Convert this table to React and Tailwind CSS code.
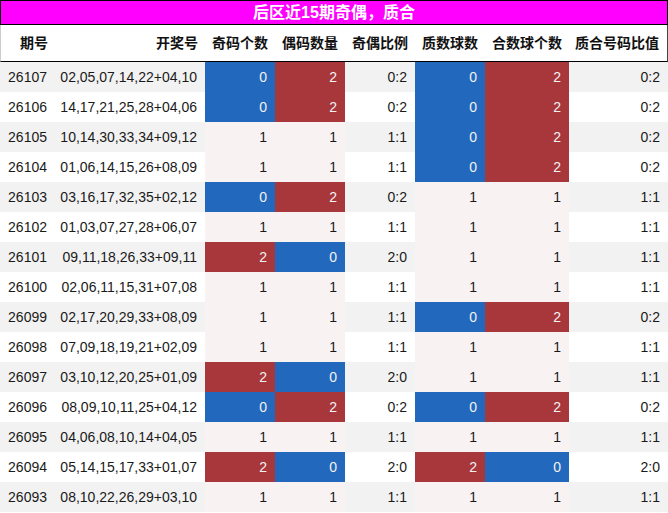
import React from "react";

const rows = [
  ["26107", "02,05,07,14,22+04,10", 0, 2, "0:2", 0, 2, "0:2"],
  ["26106", "14,17,21,25,28+04,06", 0, 2, "0:2", 0, 2, "0:2"],
  ["26105", "10,14,30,33,34+09,12", 1, 1, "1:1", 0, 2, "0:2"],
  ["26104", "01,06,14,15,26+08,09", 1, 1, "1:1", 0, 2, "0:2"],
  ["26103", "03,16,17,32,35+02,12", 0, 2, "0:2", 1, 1, "1:1"],
  ["26102", "01,03,07,27,28+06,07", 1, 1, "1:1", 1, 1, "1:1"],
  ["26101", "09,11,18,26,33+09,11", 2, 0, "2:0", 1, 1, "1:1"],
  ["26100", "02,06,11,15,31+07,08", 1, 1, "1:1", 1, 1, "1:1"],
  ["26099", "02,17,20,29,33+08,09", 1, 1, "1:1", 0, 2, "0:2"],
  ["26098", "07,09,18,19,21+02,09", 1, 1, "1:1", 1, 1, "1:1"],
  ["26097", "03,10,12,20,25+01,09", 2, 0, "2:0", 1, 1, "1:1"],
  ["26096", "08,09,10,11,25+04,12", 0, 2, "0:2", 0, 2, "0:2"],
  ["26095", "04,06,08,10,14+04,05", 1, 1, "1:1", 1, 1, "1:1"],
  ["26094", "05,14,15,17,33+01,07", 2, 0, "2:0", 2, 0, "2:0"],
  ["26093", "08,10,22,26,29+03,10", 1, 1, "1:1", 1, 1, "1:1"],
];

const widths = ["w-[55px]", "w-[150px]", "w-[70px]", "w-[70px]", "w-[70px]", "w-[70px]", "w-[84px]", "flex-1"];
const headers = ["期号", "开奖号", "奇码个数", "偶码数量", "奇偶比例", "质数球数", "合数球个数", "质合号码比值"];

function countCls(v) {
  if (v === 0) return "bg-[#2268bd] text-[#f2f2f2]";
  if (v === 2) return "bg-[#a8373c] text-[#f2f2f2]";
  return "bg-[#f9f2f2] text-[#1a1a1a]";
}

export default function App() {
  return (
    <div className="w-[668px] h-[513px] bg-white overflow-hidden" style={{ fontFamily: '"Liberation Sans", "Noto Sans CJK SC", sans-serif' }}>
      <div className="h-[25px] bg-[#ff00ff] border border-black flex items-center justify-center text-white font-bold text-[16px] leading-none whitespace-nowrap">
        后区近15期奇偶，质合
      </div>
      <div className="h-[37px] flex border-b border-black border-l border-l-[#cccccc] border-r border-r-[#444]">
        {headers.map((h, i) => (
          <div key={i} className={`${widths[i]} shrink-0 h-full flex items-center justify-end pr-2 font-bold text-[14px] text-[#111] whitespace-nowrap`}>
            {h}
          </div>
        ))}
      </div>
      {rows.map((r, ri) => {
        const rowBg = ri % 2 === 0 ? "bg-[#f2f2f2]" : "bg-white";
        return (
          <div key={ri} className={`h-[30px] flex text-[14px] text-[#1a1a1a] pl-px ${rowBg}`}>
            {r.map((c, ci) => {
              const colored = ci === 2 || ci === 3 || ci === 5 || ci === 6;
              const cls = colored ? countCls(c) : "";
              return (
                <div key={ci} className={`${ci === 0 ? "w-[54px]" : widths[ci]} shrink-0 h-full flex items-center justify-end pr-2 whitespace-nowrap ${cls}`}>
                  {c}
                </div>
              );
            })}
          </div>
        );
      })}
    </div>
  );
}
